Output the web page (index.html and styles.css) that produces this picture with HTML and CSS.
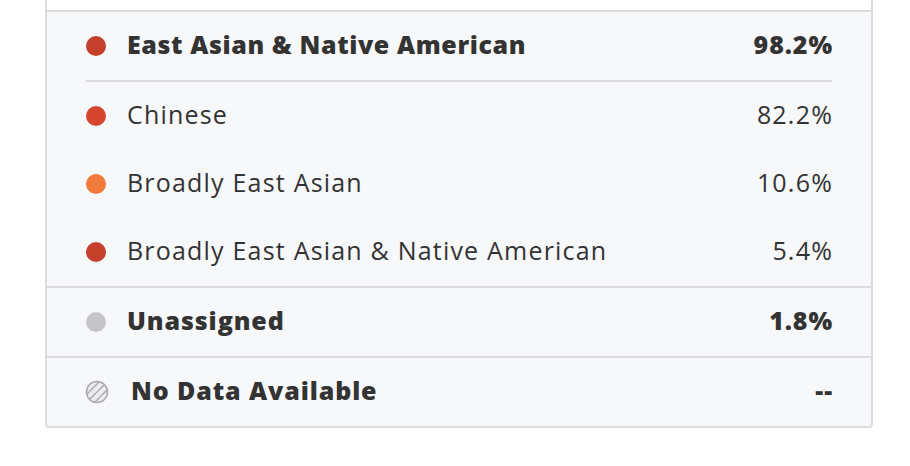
FILE: index.html
```html
<!DOCTYPE html>
<html>
<head>
<meta charset="utf-8">
<link rel="stylesheet" href="styles.css">
</head>
<body>
<div class="card">
  <div class="card-top"></div>
  <div class="card-body">
    <div class="group">
      <div class="row row-main">
        <span class="dot dot-red"></span>
        <span class="label label-head">East Asian &amp; Native American</span>
        <span class="value">98.2%</span>
      </div>
      <div class="inner-sep"></div>
      <div class="row">
        <span class="dot dot-chinese"></span>
        <span class="label">Chinese</span>
        <span class="value">82.2%</span>
      </div>
      <div class="row">
        <span class="dot dot-orange"></span>
        <span class="label">Broadly East Asian</span>
        <span class="value">10.6%</span>
      </div>
      <div class="row">
        <span class="dot dot-red"></span>
        <span class="label">Broadly East Asian &amp; Native American</span>
        <span class="value">5.4%</span>
      </div>
    </div>
    <div class="group">
      <div class="row row-main">
        <span class="dot dot-gray"></span>
        <span class="label">Unassigned</span>
        <span class="value">1.8%</span>
      </div>
    </div>
    <div class="group">
      <div class="row row-main">
        <svg class="nodata" width="24" height="24" viewBox="0 0 24 24">
          <defs>
            <clipPath id="c"><circle cx="12" cy="12" r="10.5"/></clipPath>
          </defs>
          <circle cx="12" cy="12" r="10.5" fill="#ececee"/>
          <g clip-path="url(#c)" stroke="#a9a9ad" stroke-width="1.3">
            <line x1="0" y1="16" x2="16" y2="0"/>
            <line x1="3" y1="21" x2="21" y2="3"/>
            <line x1="8" y1="24" x2="24" y2="8"/>
          </g>
          <circle cx="12" cy="12" r="10.5" fill="none" stroke="#a9a9ad" stroke-width="1.5"/>
        </svg>
        <span class="label label-nodata">No Data Available</span>
        <span class="value">--</span>
      </div>
    </div>
  </div>
</div>
</body>
</html>
```
FILE: styles.css
```css
html, body {
  margin: 0;
  padding: 0;
  background: #ffffff;
}
body {
  font-family: "Open Sans", "Noto Sans", sans-serif;
  color: #333333;
}
.card {
  margin-left: 45px;
  width: 828px;
  box-sizing: border-box;
}
.card-top {
  height: 10px;
  border-left: 2px solid #dcdcde;
  border-right: 2px solid #dcdcde;
  background: #ffffff;
}
.card-body {
  background: #f7f8fa;
  border: 2px solid #dcdcde;
  border-radius: 0 0 4px 4px;
}
.group + .group {
  border-top: 2px solid #dcdcde;
}
.row {
  display: flex;
  align-items: center;
  height: 68px;
  padding: 0 39px;
  font-size: 25px;
  font-weight: 400;
  line-height: 30px;
  letter-spacing: 1.2px;
}
.row-main {
  font-weight: 800;
  letter-spacing: 0.9px;
}
.dot {
  width: 20px;
  height: 20px;
  border-radius: 50%;
  flex: none;
}
.dot-red { background: #c4402a; }
.dot-chinese { background: #d6452d; }
.dot-orange { background: #ef7a3a; }
.dot-gray { background: #c6c6c8; }
.nodata {
  flex: none;
  margin-left: -1px;
}
.label {
  margin-left: 21px;
  flex: 1;
  padding-bottom: 4px;
}
.label-head {
  letter-spacing: 0.6px;
}
.label-nodata {
  margin-left: 22px;
}
.value {
  flex: none;
  margin-right: -1px;
  padding-bottom: 4px;
}
.inner-sep {
  height: 2px;
  margin: 0 39px;
  background: #dcdcde;
}
```
